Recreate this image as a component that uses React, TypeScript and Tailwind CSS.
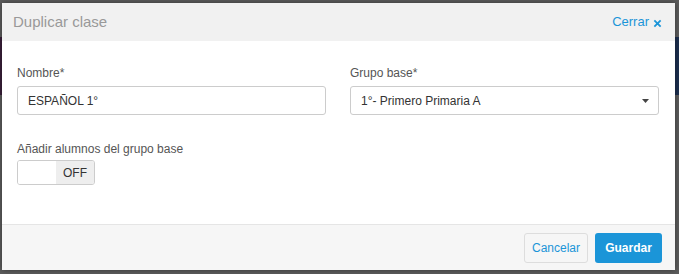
export default function App() {
  return (
    <div className="relative h-[274px] w-[679px] overflow-hidden bg-[#5c5c5c] pl-[2px] pr-[4px] pt-[3px] pb-[4px] font-['Liberation_Sans',Arial,sans-serif]">
      {/* page behind the overlay */}
      <div className="absolute left-0 top-[37px] h-[58px] w-[4px] bg-[#3a1f3a]" />
      <div className="absolute right-0 top-[37px] h-[58px] w-[6px] bg-[#1c2f4f]" />

      <div className="relative flex h-full flex-col bg-white shadow-[0_0_6px_rgba(0,0,0,0.4)]">
        {/* Header */}
        <header className="flex h-[38px] items-center justify-between bg-[#f1f1f1] pl-[11px] pr-[13px]">
          <h1 className="text-[15px] text-[#999999]">Duplicar clase</h1>
          <button className="flex items-center gap-[4px] text-[13px] text-[#1b95d8]">
            Cerrar
            <svg width="9" height="9" viewBox="0 0 10 10" className="mt-[2px]">
              <path d="M1.5 1.5 L8.5 8.5 M8.5 1.5 L1.5 8.5" stroke="#1b95d8" strokeWidth="2" />
            </svg>
          </button>
        </header>

        {/* Body */}
        <main className="flex-1 pl-[15px] pr-[16px] pt-[24px]">
          <div className="grid grid-cols-2 gap-x-[24px]">
            <div>
              <label className="block text-[12px] leading-[17px] text-[#555555]">Nombre*</label>
              <div className="mt-[4px] flex h-[29px] items-center rounded-[3px] border border-[#cccccc] px-[10px] text-[12px] text-[#333333]">
                ESPAÑOL 1°
              </div>
            </div>
            <div>
              <label className="block text-[12px] leading-[17px] text-[#555555]">Grupo base*</label>
              <div className="mt-[4px] flex h-[29px] items-center justify-between rounded-[3px] border border-[#cccccc] pl-[10px] pr-[9px] text-[12px] text-[#333333]">
                <span>1°- Primero Primaria A</span>
                <svg width="7" height="4" viewBox="0 0 7 4">
                  <path d="M0 0 H7 L3.5 4 Z" fill="#444444" />
                </svg>
              </div>
            </div>
          </div>

          <div className="mt-[26px]">
            <label className="block text-[12px] leading-[17px] text-[#555555]">Añadir alumnos del grupo base</label>
            <div className="mt-[2px] flex h-[25px] w-[78px] overflow-hidden rounded-[3px] border border-[#cccccc]">
              <div className="w-[38px] bg-white" />
              <div className="flex flex-1 items-center justify-center bg-[#eeeeee] text-[12px] text-[#333333]">OFF</div>
            </div>
          </div>
        </main>

        {/* Footer */}
        <footer className="flex h-[46px] items-center justify-end gap-[7px] border-t border-[#e5e5e5] bg-[#f6f6f6] pr-[13px]">
          <button className="h-[30px] w-[64px] rounded-[3px] border border-[#dddddd] bg-[#f6f6f6] text-[12px] text-[#1b95d8]">
            Cancelar
          </button>
          <button className="h-[30px] w-[67px] rounded-[3px] bg-[#1b95d8] text-[12px] font-bold text-white">
            Guardar
          </button>
        </footer>
      </div>
    </div>
  );
}
